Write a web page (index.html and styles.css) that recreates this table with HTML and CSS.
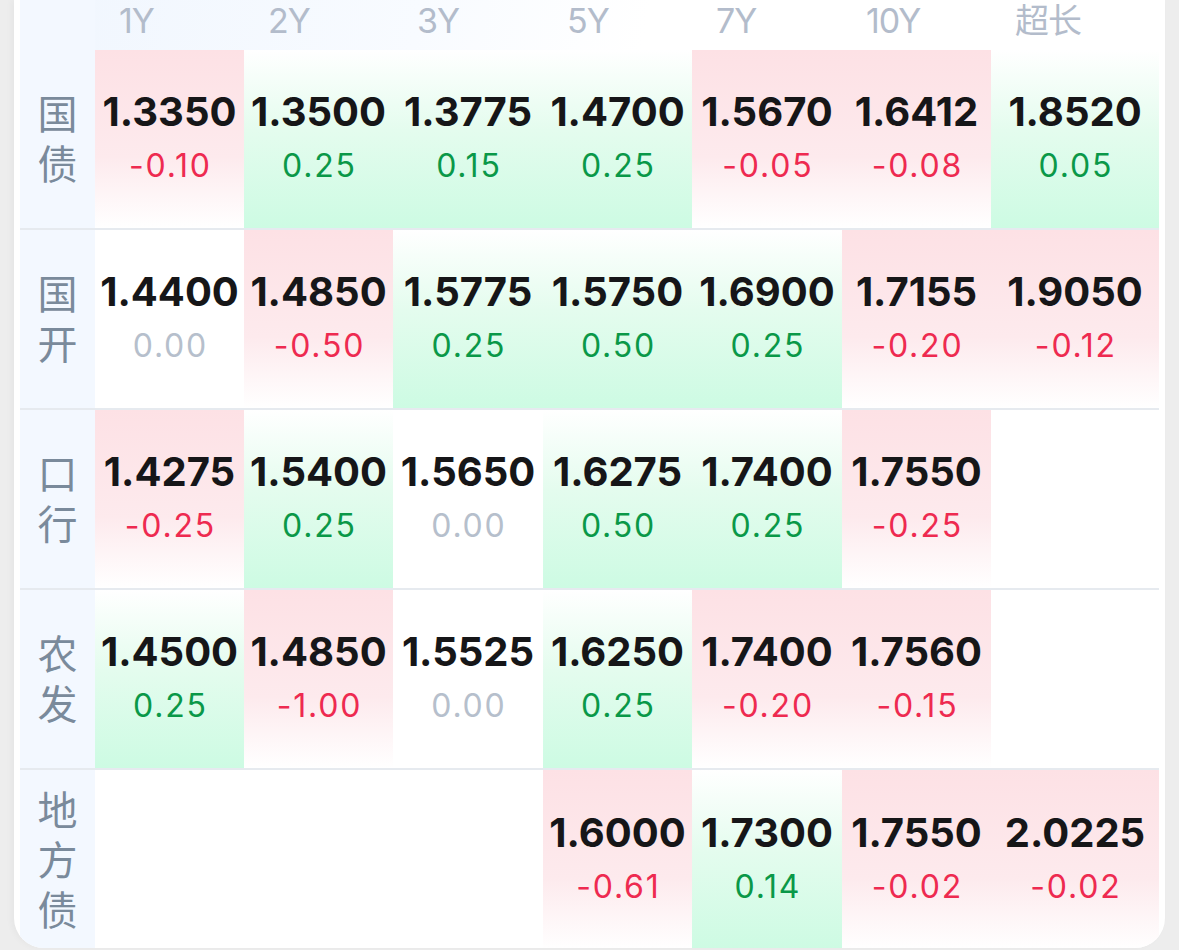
FILE: index.html
```html
<!DOCTYPE html>
<html lang="zh">
<head>
<meta charset="utf-8">
<title>收益率</title>
<link rel="stylesheet" href="styles.css">
</head>
<body>
<div class="card">
  <div class="grid">
    <div class="head corner"></div>
    <div class="head"><span>1Y</span></div>
    <div class="head"><span>2Y</span></div>
    <div class="head"><span>3Y</span></div>
    <div class="head"><span>5Y</span></div>
    <div class="head"><span>7Y</span></div>
    <div class="head"><span>10Y</span></div>
    <div class="head"><span>超长</span></div>

    <div class="label"><span>国债</span></div>
    <div class="cell up"><b>1.3350</b><i>-0.10</i></div>
    <div class="cell down"><b>1.3500</b><i>0.25</i></div>
    <div class="cell down"><b>1.3775</b><i>0.15</i></div>
    <div class="cell down"><b>1.4700</b><i>0.25</i></div>
    <div class="cell up"><b>1.5670</b><i>-0.05</i></div>
    <div class="cell up"><b>1.6412</b><i>-0.08</i></div>
    <div class="cell down"><b>1.8520</b><i>0.05</i></div>

    <div class="label"><span>国开</span></div>
    <div class="cell flat"><b>1.4400</b><i>0.00</i></div>
    <div class="cell up"><b>1.4850</b><i>-0.50</i></div>
    <div class="cell down"><b>1.5775</b><i>0.25</i></div>
    <div class="cell down"><b>1.5750</b><i>0.50</i></div>
    <div class="cell down"><b>1.6900</b><i>0.25</i></div>
    <div class="cell up"><b>1.7155</b><i>-0.20</i></div>
    <div class="cell up"><b>1.9050</b><i>-0.12</i></div>

    <div class="label"><span>口行</span></div>
    <div class="cell up"><b>1.4275</b><i>-0.25</i></div>
    <div class="cell down"><b>1.5400</b><i>0.25</i></div>
    <div class="cell flat"><b>1.5650</b><i>0.00</i></div>
    <div class="cell down"><b>1.6275</b><i>0.50</i></div>
    <div class="cell down"><b>1.7400</b><i>0.25</i></div>
    <div class="cell up"><b>1.7550</b><i>-0.25</i></div>
    <div class="cell empty"></div>

    <div class="label"><span>农发</span></div>
    <div class="cell down"><b>1.4500</b><i>0.25</i></div>
    <div class="cell up"><b>1.4850</b><i>-1.00</i></div>
    <div class="cell flat"><b>1.5525</b><i>0.00</i></div>
    <div class="cell down"><b>1.6250</b><i>0.25</i></div>
    <div class="cell up"><b>1.7400</b><i>-0.20</i></div>
    <div class="cell up"><b>1.7560</b><i>-0.15</i></div>
    <div class="cell empty"></div>

    <div class="label last"><span>地方债</span></div>
    <div class="cell empty last"></div>
    <div class="cell empty last"></div>
    <div class="cell empty last"></div>
    <div class="cell up last"><b>1.6000</b><i>-0.61</i></div>
    <div class="cell down last"><b>1.7300</b><i>0.14</i></div>
    <div class="cell up last"><b>1.7550</b><i>-0.02</i></div>
    <div class="cell up last"><b>2.0225</b><i>-0.02</i></div>
  </div>
</div>
</body>
</html>
```

FILE: styles.css
```css
html, body {
  margin: 0;
  padding: 0;
  background: #ededed;
  height: 950px;
  overflow: hidden;
}
body {
  padding-left: 14px;
  font-family: Inter, "Noto Sans CJK SC", sans-serif;
}
.card {
  width: 1151px;
  height: 948px;
  box-sizing: border-box;
  background: #fff;
  border-radius: 0 0 30px 30px;
  padding: 0 6px;
  overflow: hidden;
  box-shadow: -3px 0 6px rgba(0, 0, 0, 0.03);
}
.grid {
  display: grid;
  grid-template-columns: 75px 149px 149px 150px 149px 150px 149px 168px;
  grid-template-rows: 50px 180px 180px 180px 180px 180px;
  background: linear-gradient(100deg, #f0f6fe 0%, #f8fbff 35%, #ffffff 55%);
  background-size: 100% 50px;
  background-repeat: no-repeat;
}
.head {
  display: flex;
  align-items: flex-start;
  padding-left: 24px;
  color: #b3bccb;
  font-size: 34px;
  line-height: 42px;
  font-family: Inter, "Noto Sans CJK SC", sans-serif;
  letter-spacing: -1px;
}
.head.corner {
  background: #f3f8ff;
  padding: 0;
}
.label {
  background: #f3f8ff;
  border-bottom: 2px solid #e6eaef;
  display: flex;
  align-items: center;
  justify-content: center;
  color: #7a8a9b;
  font-family: "Noto Sans CJK SC", sans-serif;
  font-size: 40px;
}
.label span {
  writing-mode: vertical-rl;
  text-orientation: upright;
  letter-spacing: 10px;
  line-height: 40px;
  margin-bottom: -10px;
}
.cell {
  border-bottom: 2px solid #e6eaef;
  display: flex;
  flex-direction: column;
  align-items: center;
  justify-content: center;
}
.last {
  border-bottom: none;
}
.cell b {
  font-weight: 700;
  font-size: 40px;
  line-height: 52px;
  color: #161618;
  letter-spacing: 0;
}
.cell i {
  font-style: normal;
  font-weight: 400;
  font-size: 32px;
  line-height: 52px;
  letter-spacing: 1.8px;
  margin-right: -1.8px;
  margin-top: 2px;
}
.up {
  background: linear-gradient(180deg, #fde1e5 0%, #fdeaed 60%, #ffffff 100%);
}
.up i { color: #ee2a50; }
.down {
  background: linear-gradient(180deg, #ffffff 0%, #e4fcee 45%, #cdfbe3 100%);
}
.down i { color: #0a9848; }
.flat i { color: #b6bfcc; }
```
